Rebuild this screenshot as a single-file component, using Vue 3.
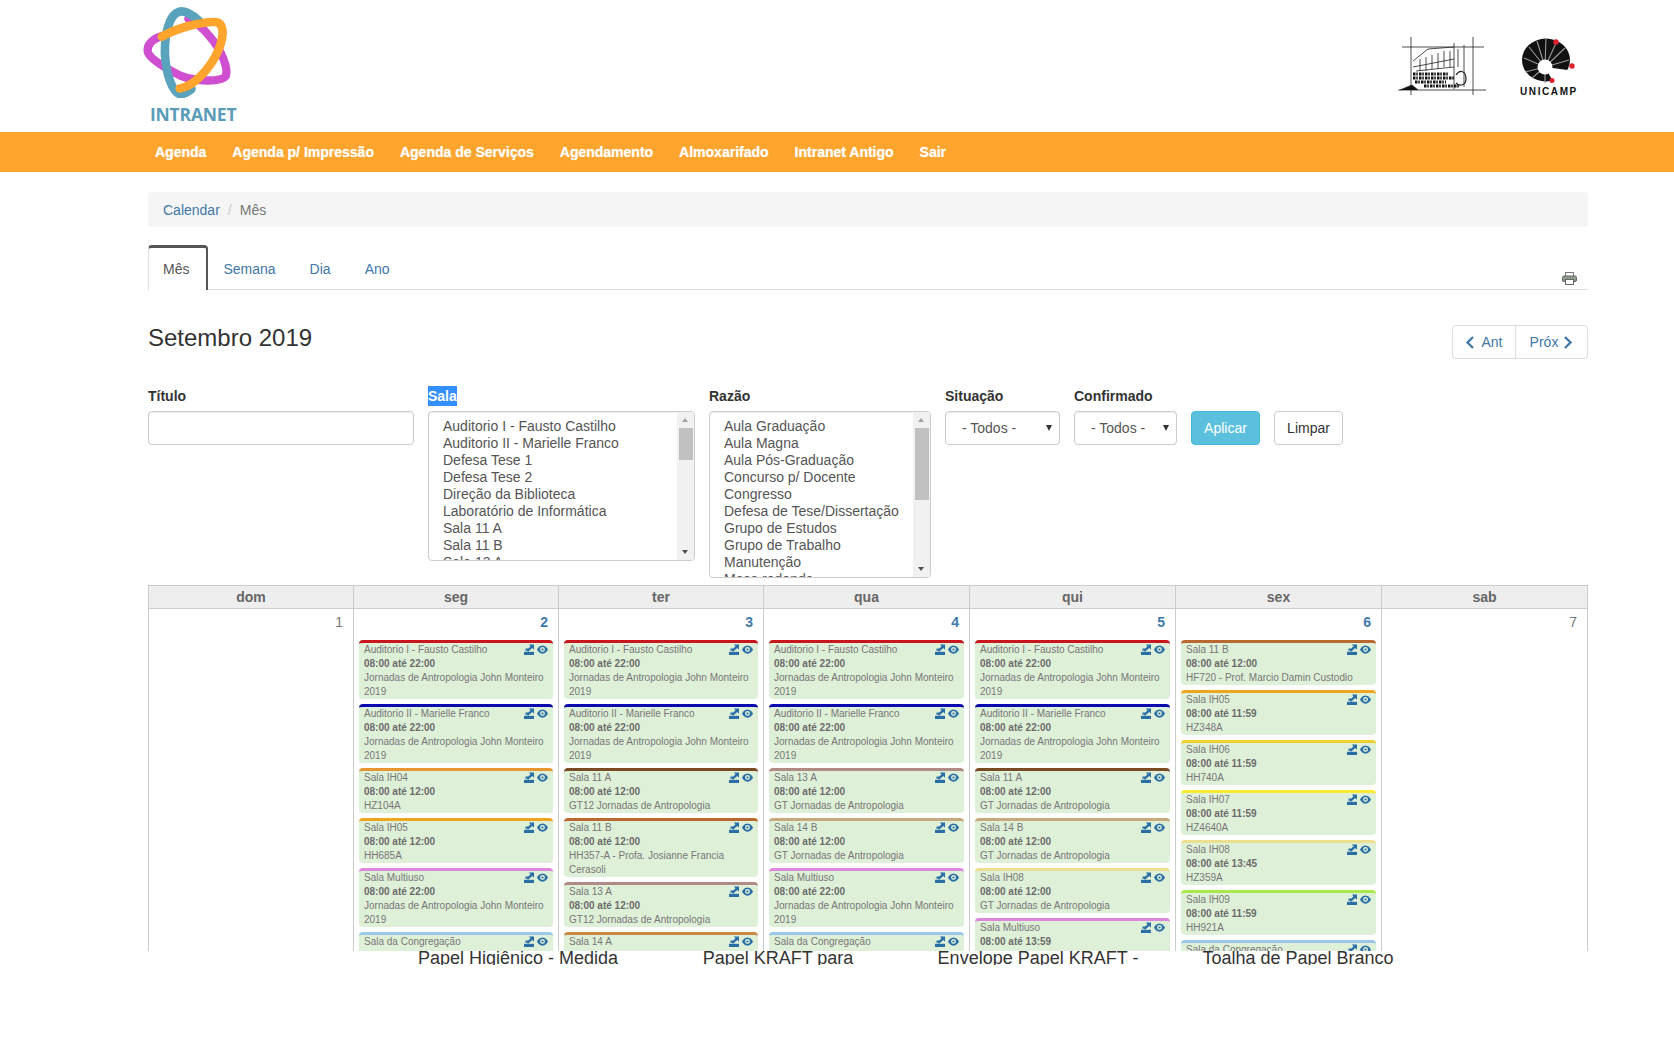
<template>
  <div class="page">
    <header class="top">
      <div class="logo">
        <svg class="logo-mark" viewBox="60 15 285 285" fill="none" stroke-linecap="round">
          <path d="M125 105C90 115 75 135 78 155C82 175 130 205 180 230C230 250 310 250 322 232C332 210 310 150 270 105C250 80 225 60 205 52" stroke="#cf4fd0" stroke-width="26" />
          <path d="M240 60C215 35 190 25 175 30C145 40 130 100 132 165C135 225 155 280 178 288C190 290 205 280 215 272" stroke="#5aa3bd" stroke-width="27" />
          <path d="M122 108C170 80 250 60 290 62C315 65 318 95 305 135C290 180 255 225 225 248C210 260 190 268 178 270" stroke="#ffa52d" stroke-width="27" />
        </svg>
        <div class="logo-text">INTRANET</div>
      </div>
      <div class="partners">
        <svg class="sketch" viewBox="0 0 89 58" fill="none" stroke="#222" stroke-width="0.8">
          <path d="M13 0V58M75 0V58M56 6V52M66 8V50M4 10H86M0 53H88" />
          <path d="M15 24L30 12L56 10M15 30L56 22M18 34L56 30" />
          <path d="M22 22V34M28 20V34M34 18V32M40 16V32M46 14V30M52 14V30M60 12V30" />
          <path d="M15 37H50M15 41H56M17 45H48M26 49H62" stroke="#111" stroke-width="3" stroke-dasharray="2.500 0.800 1.500 1.200" />
          <path d="M58 38C62 32 68 34 68 42C68 48 62 50 58 46" stroke-width="1.200" />
          <path d="M2 53L14 48L20 53" fill="#111" />
        </svg>
        <div class="unicamp">
          <svg viewBox="0 0 53 45" class="unicamp-mark">
            <ellipse cx="24" cy="22" rx="24" ry="21.500" fill="#111" />
            <path d="M23 29L53 33L34 49Z" fill="#fff" />
            <path d="M23 29L2 20M23 29L7 9M23 29L15 3M23 29L24 0M23 29L35 3M23 29L43 10M23 29L47 22M23 29L3 34M23 29L10 40M23 29V45" stroke="#999" stroke-width="1.100" />
            <circle cx="23" cy="29" r="7.500" fill="#fff" />
            <circle cx="34" cy="4" r="2.700" fill="#e0202c" />
            <circle cx="50" cy="28" r="2.700" fill="#e0202c" />
            <circle cx="30" cy="42.500" r="2.500" fill="#e0202c" />
          </svg>
          <div class="unicamp-text">UNICAMP</div>
        </div>
      </div>
    </header>

    <nav class="menu">
      <a v-for="item in menu" :key="item" class="menu-item">{{ item }}</a>
    </nav>

    <main class="content">
      <div class="breadcrumb">
        <a class="link">Calendar</a>
        <span class="sep">/</span>
        <span class="muted">Mês</span>
      </div>

      <div class="tabs">
        <a class="tab active">Mês</a>
        <a class="tab">Semana</a>
        <a class="tab">Dia</a>
        <a class="tab">Ano</a>
        <svg class="printer" viewBox="0 0 15 13">
          <rect x="3.500" y="0.500" width="8" height="4" fill="#fff" stroke="#777" />
          <rect x="0.500" y="4" width="14" height="5.500" rx="1.500" fill="#8f9a8e" stroke="#666" />
          <rect x="3.500" y="7.500" width="8" height="5" fill="#fff" stroke="#666" />
        </svg>
      </div>

      <div class="title-row">
        <h2 class="title">Setembro 2019</h2>
        <div class="pager">
          <a class="pager-btn">
            <svg class="chev" viewBox="0 0 10 14"><path d="M8 1.500L2.500 7L8 12.500" /></svg>
            Ant
          </a>
          <a class="pager-btn">
            Próx
            <svg class="chev" viewBox="0 0 10 14"><path d="M2 1.500L7.500 7L2 12.500" /></svg>
          </a>
        </div>
      </div>

      <div class="filters">
        <div class="field f-title">
          <label>Título</label>
          <input class="input" type="text" />
        </div>
        <div class="field f-room">
          <label><span class="picked">Sala</span></label>
          <div class="listbox room-box">
            <div class="list-items">
              <div v-for="r in rooms" :key="r">{{ r }}</div>
            </div>
            <div class="scroll">
              <i class="arrow up"></i>
              <b class="thumb room-thumb"></b>
              <i class="arrow down"></i>
            </div>
          </div>
        </div>
        <div class="field f-reason">
          <label>Razão</label>
          <div class="listbox reason-box">
            <div class="list-items">
              <div v-for="r in reasons" :key="r">{{ r }}</div>
            </div>
            <div class="scroll">
              <i class="arrow up"></i>
              <b class="thumb reason-thumb"></b>
              <i class="arrow down"></i>
            </div>
          </div>
        </div>
        <div class="field f-status">
          <label>Situação</label>
          <div class="select">- Todos -<i class="caret"></i></div>
        </div>
        <div class="field f-confirm">
          <label>Confirmado</label>
          <div class="select">- Todos -<i class="caret"></i></div>
        </div>
        <div class="actions">
          <button class="btn primary">Aplicar</button>
          <button class="btn">Limpar</button>
        </div>
      </div>

      <div class="calendar">
        <div class="week-head">
          <div v-for="d in weekdays" :key="d" class="head-cell">{{ d }}</div>
        </div>
        <div class="week">
          <div v-for="day in days" :key="day.n" class="day">
            <div :class="['day-num', { busy: day.events.length }]">{{ day.n }}</div>
            <div v-for="(ev, i) in day.events" :key="i" class="event" :style="{ borderTopColor: ev.color }">
              <span class="event-icons">
                <svg class="ic" viewBox="0 0 10 11">
                  <path d="M0 7.800h10V11H0z" />
                  <path d="M1.500 7.800V4.500h3L1.500 7.200zM4.800 0.500H10v5.200L8.300 4 4 7.800 2.500 6.300 6.500 2.300z" />
                </svg>
                <svg class="ic eye" viewBox="0 0 12 9">
                  <path fill-rule="evenodd" d="M6 0c3 0 5 2.500 6 4.500C11 6.500 9 9 6 9S1 6.500 0 4.500C1 2.500 3 0 6 0zm0 1.800a2.700 2.700 0 1 0 0 5.400a2.700 2.700 0 0 0 0-5.400zM6 3.300a1.200 1.200 0 1 1 0 2.400a1.200 1.200 0 0 1 0-2.400z" />
                </svg>
              </span>
              <div>{{ ev.room }}</div>
              <div class="event-time">{{ ev.time }}</div>
              <div>{{ ev.text }}</div>
            </div>
          </div>
        </div>
      </div>

      <div class="cut-row">
        <div v-for="p in products" :key="p" class="cut-item">{{ p }}</div>
      </div>
    </main>
  </div>
</template>

<script setup>
const menu = [
  "Agenda",
  "Agenda p/ Impressão",
  "Agenda de Serviços",
  "Agendamento",
  "Almoxarifado",
  "Intranet Antigo",
  "Sair",
];

const rooms = [
  "Auditorio I - Fausto Castilho",
  "Auditorio II - Marielle Franco",
  "Defesa Tese 1",
  "Defesa Tese 2",
  "Direção da Biblioteca",
  "Laboratório de Informática",
  "Sala 11 A",
  "Sala 11 B",
  "Sala 13 A",
];

const reasons = [
  "Aula Graduação",
  "Aula Magna",
  "Aula Pós-Graduação",
  "Concurso p/ Docente",
  "Congresso",
  "Defesa de Tese/Dissertação",
  "Grupo de Estudos",
  "Grupo de Trabalho",
  "Manutenção",
  "Mesa redonda",
];

const weekdays = ["dom", "seg", "ter", "qua", "qui", "sex", "sab"];

const JM = "Jornadas de Antropologia John Monteiro 2019";
const GT = "GT Jornadas de Antropologia";
const GT12 = "GT12 Jornadas de Antropologia";
const T12 = "08:00 até 12:00";
const T22 = "08:00 até 22:00";
const T1159 = "08:00 até 11:59";

const ev = (room, color, time, text) => ({ room, color, time, text });
const aud1 = ev("Auditorio I - Fausto Castilho", "#c9161c", T22, JM);
const aud2 = ev("Auditorio II - Marielle Franco", "#0a0ab0", T22, JM);
const multi = ev("Sala Multiuso", "#dd88dd", T22, JM);
const congr = ev("Sala da Congregação", "#99c8ea", T22, JM);

const days = [
  { n: 1, events: [] },
  {
    n: 2,
    events: [
      aud1,
      aud2,
      ev("Sala IH04", "#e5962f", T12, "HZ104A"),
      ev("Sala IH05", "#eea51f", T12, "HH685A"),
      multi,
      congr,
    ],
  },
  {
    n: 3,
    events: [
      aud1,
      aud2,
      ev("Sala 11 A", "#7a4a22", T12, GT12),
      ev("Sala 11 B", "#b9682f", T12, "HH357-A - Profa. Josianne Francia Cerasoli"),
      ev("Sala 13 A", "#b08a84", T12, GT12),
      ev("Sala 14 A", "#c98a45", T12, GT12),
    ],
  },
  {
    n: 4,
    events: [
      aud1,
      aud2,
      ev("Sala 13 A", "#b08a84", T12, GT),
      ev("Sala 14 B", "#c8a97e", T12, GT),
      multi,
      congr,
    ],
  },
  {
    n: 5,
    events: [
      aud1,
      aud2,
      ev("Sala 11 A", "#7a4a22", T12, GT),
      ev("Sala 14 B", "#c8a97e", T12, GT),
      ev("Sala IH08", "#ece08e", T12, GT),
      ev("Sala Multiuso", "#dd88dd", "08:00 até 13:59", GT),
    ],
  },
  {
    n: 6,
    events: [
      ev("Sala 11 B", "#b9682f", T12, "HF720 - Prof. Marcio Damin Custodio"),
      ev("Sala IH05", "#eea51f", T1159, "HZ348A"),
      ev("Sala IH06", "#f0d030", T1159, "HH740A"),
      ev("Sala IH07", "#f8ec30", T1159, "HZ4640A"),
      ev("Sala IH08", "#ece08e", "08:00 até 13:45", "HZ359A"),
      ev("Sala IH09", "#a8e84a", T1159, "HH921A"),
      congr,
    ],
  },
  { n: 7, events: [] },
];

const products = [
  "Papel Higiênico - Medida",
  "Papel KRAFT para",
  "Envelope Papel KRAFT -",
  "Toalha de Papel Branco",
];
</script>

<style>
html,
body {
  background: #fff;
}
</style>

<style scoped>
.page {
  font-family: "Liberation Sans", Arial, sans-serif;
  font-size: 14px;
  line-height: 20px;
  color: #333;
  height: 1050px;
  overflow: hidden;
}

.top {
  height: 132px;
  display: flex;
  justify-content: space-between;
  padding: 0 97px 0 142px;
  box-sizing: border-box;
}

.logo {
  padding-top: 7px;
}

.logo-mark {
  display: block;
  width: 91px;
  height: 91px;
}

.logo-text {
  margin: 5px 0 0 8px;
  font-family: "Open Sans", sans-serif;
  font-weight: 700;
  font-size: 17.500px;
  line-height: 22px;
  color: #5b9cb8;
  letter-spacing: -0.2px;
}

.partners {
  display: flex;
  gap: 33px;
  padding-top: 37px;
}

.sketch {
  width: 89px;
  height: 58px;
}

.unicamp {
  width: 57px;
  padding-top: 1px;
}

.unicamp-mark {
  display: block;
  width: 53px;
  height: 45px;
  margin-left: 2px;
}

.unicamp-text {
  margin-top: 3px;
  font-size: 10px;
  line-height: 12px;
  font-weight: 700;
  white-space: nowrap;
  color: #111;
  letter-spacing: 1.600px;
}

.menu {
  height: 40px;
  background: #ffa52d;
  display: flex;
  align-items: center;
  gap: 26px;
  padding-left: 155px;
}

.menu-item {
  color: #fff;
  font-weight: 700;
  text-shadow: 0 0 1px rgba(255, 255, 255, 0.7);
}

.content {
  width: 1440px;
  margin-left: 148px;
}

.breadcrumb {
  margin-top: 20px;
  height: 35px;
  padding: 8px 15px 7px;
  box-sizing: border-box;
  background: #f5f5f5;
  border-radius: 4px;
}

.link {
  color: #3f78aa;
}

.sep {
  color: #ccc;
  padding: 0 8px;
}

.muted {
  color: #777;
}

.tabs {
  margin-top: 18px;
  display: flex;
  gap: 4px;
  height: 45px;
  box-sizing: border-box;
  border-bottom: 1px solid #ddd;
}

.tab {
  padding: 14px 15px 0;
  color: #3f78aa;
}

.tab.active {
  padding: 11px 17px 0 14px;
  color: #555;
  border: 1px solid #ddd;
  border-top: 3px solid #555;
  border-right: 2px solid #555;
  border-bottom: 0;
  border-radius: 4px 4px 0 0;
  margin-right: -4px;
  background: #fff;
  height: 45px;
  box-sizing: border-box;
}

.printer {
  width: 15px;
  height: 13px;
  margin: auto 11px 4px auto;
}

.title-row {
  margin-top: 35px;
  display: flex;
  justify-content: space-between;
}

.title {
  margin: 0;
  font-size: 24px;
  font-weight: 400;
  line-height: 26px;
}

.pager {
  display: flex;
  height: 34px;
  box-sizing: border-box;
  border: 1px solid #ddd;
  border-radius: 4px;
  color: #3f78aa;
}

.pager-btn {
  display: flex;
  align-items: center;
  justify-content: center;
  gap: 6px;
  width: 62px;
}

.pager-btn + .pager-btn {
  width: 71px;
  gap: 5px;
  border-left: 1px solid #ddd;
}

.chev {
  width: 10px;
  height: 15px;
  fill: none;
  stroke: #3f78aa;
  stroke-width: 2.300;
}

.filters {
  margin-top: 27px;
  display: flex;
  gap: 14px;
  height: 191px;
}

.field label {
  display: block;
  height: 20px;
  margin-bottom: 5px;
  font-weight: 700;
}

.picked {
  display: inline-block;
  background: #3390ff;
  color: #fff;
}

.f-title {
  width: 266px;
}

.f-room {
  width: 267px;
}

.f-reason {
  width: 222px;
}

.f-status {
  width: 115px;
}

.f-confirm {
  width: 103px;
}

.input,
.select {
  display: block;
  width: 100%;
  height: 34px;
  box-sizing: border-box;
  border: 1px solid #ccc;
  border-radius: 4px;
  background: #fff;
  box-shadow: inset 0 1px 1px rgba(0, 0, 0, 0.075);
}

.select {
  display: flex;
  align-items: center;
  justify-content: space-between;
  padding: 0 7px 0 16px;
  color: #555;
}

.caret {
  width: 0;
  height: 0;
  border-left: 3px solid transparent;
  border-right: 3px solid transparent;
  border-top: 6px solid #333;
}

.listbox {
  display: flex;
  box-sizing: border-box;
  border: 1px solid #ccc;
  border-radius: 4px;
  overflow: hidden;
  color: #555;
  box-shadow: inset 0 1px 1px rgba(0, 0, 0, 0.075);
}

.room-box {
  height: 150px;
}

.reason-box {
  height: 167px;
}

.list-items {
  flex: 1;
  padding: 6px 0 0 14px;
  line-height: 17px;
  white-space: nowrap;
  overflow: hidden;
}

.scroll {
  width: 17px;
  background: #f1f1f1;
  display: flex;
  flex-direction: column;
  align-items: center;
  position: relative;
}

.arrow {
  position: absolute;
  left: 5px;
  width: 0;
  height: 0;
  border-left: 3.500px solid transparent;
  border-right: 3.500px solid transparent;
}

.arrow.up {
  top: 6px;
  border-bottom: 4px solid #a3a3a3;
}

.arrow.down {
  bottom: 6px;
  border-top: 4px solid #505050;
}

.thumb {
  display: block;
  width: 14px;
  margin-top: 16px;
  background: #c1c1c1;
}

.room-thumb {
  height: 32px;
}

.reason-thumb {
  height: 72px;
}

.actions {
  display: flex;
  gap: 14px;
  padding-top: 25px;
  align-items: flex-start;
}

.btn {
  width: 69px;
  height: 34px;
  border: 1px solid #ccc;
  border-radius: 4px;
  background: #fff;
  font: inherit;
  color: #333;
}

.btn.primary {
  background: #5bc0de;
  border-color: #46b8da;
  color: #fff;
}

.calendar {
  margin-top: 8px;
  height: 366px;
  overflow: hidden;
  border-top: 1px solid #ccc;
  border-right: 1px solid #ccc;
  box-sizing: border-box;
}

.week-head,
.week {
  display: grid;
  grid-template-columns: repeat(3, 205px) repeat(3, 206px) 1fr;
}

.week-head {
  background: #eee;
  border-bottom: 1px solid #ccc;
}

.head-cell {
  height: 22px;
  line-height: 22px;
  text-align: center;
  font-weight: 700;
  color: #666;
  border-left: 1px solid #ccc;
}

.day {
  min-width: 0;
  padding: 0 5px;
  min-height: 400px;
  border-left: 1px solid #ccc;
}

.day-num {
  height: 31px;
  padding: 3px 5px 0 0;
  box-sizing: border-box;
  text-align: right;
  color: #777;
}

.day-num.busy {
  color: #3f78aa;
  font-weight: 700;
}

.event {
  position: relative;
  margin-bottom: 5px;
  padding: 0 5px;
  background: #dff0d8;
  border-top: 3px solid;
  border-radius: 4px;
  font-size: 10px;
  line-height: 14px;
  color: #777;
}

.event-time {
  font-weight: 700;
  color: #6b6b6b;
}

.event-icons {
  position: absolute;
  top: 1px;
  right: 5px;
  display: flex;
  align-items: center;
  gap: 3px;
  height: 11px;
}

.ic {
  width: 10px;
  height: 11px;
  fill: #2a6ea6;
}

.ic.eye {
  width: 11px;
  height: 9px;
}

.cut-row {
  display: flex;
  margin-left: 240px;
  height: 14px;
  overflow: hidden;
}

.cut-item {
  width: 260px;
  margin-top: -3px;
  text-align: center;
  font-size: 18px;
  line-height: 20px;
  color: #333;
}
</style>
